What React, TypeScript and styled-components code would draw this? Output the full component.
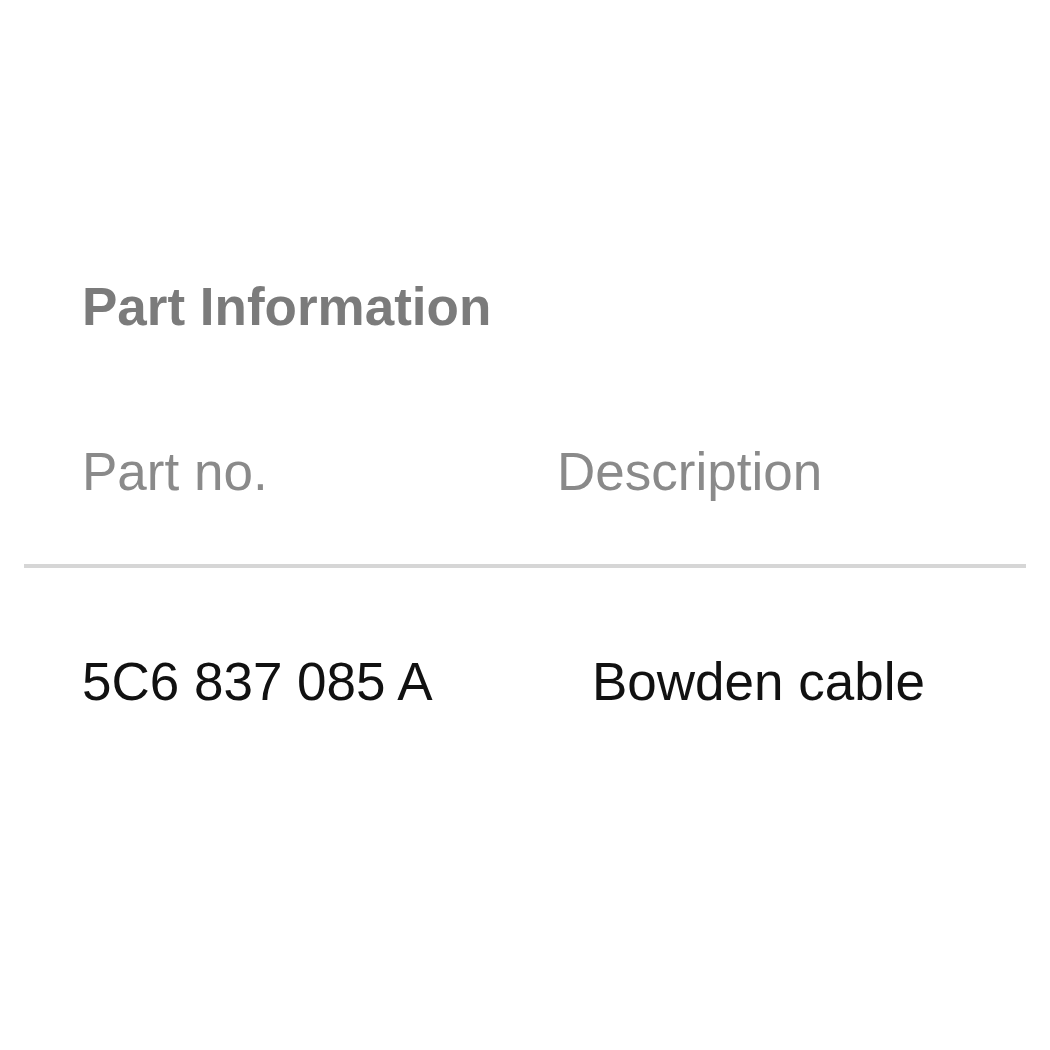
import React from 'react';
import styled, { createGlobalStyle } from 'styled-components';

const GlobalStyle = createGlobalStyle`
  body {
    margin: 0;
    background: #ffffff;
    font-family: 'Liberation Sans', Arial, sans-serif;
  }
`;

const Panel = styled.div`
  width: 1050px;
  height: 1050px;
  box-sizing: border-box;
  padding: 277px 24px 0 24px;
`;

const Heading = styled.h2`
  margin: 0 0 105px 58px;
  font-size: 53px;
  line-height: 60px;
  font-weight: bold;
  color: #7b7b7b;
`;

const Row = styled.div`
  display: grid;
  grid-template-columns: 475px 1fr;
  padding-left: 58px;
`;

const HeadCell = styled.div`
  font-size: 53px;
  line-height: 60px;
  color: #8a8a8a;
`;

const Divider = styled.hr`
  margin: 62px 0 84px 0;
  border: 0;
  height: 4px;
  background: #d6d6d6;
`;

const Cell = styled.div<{ indent?: number }>`
  font-size: 53px;
  line-height: 60px;
  color: #111111;
  padding-left: ${({ indent }) => indent || 0}px;
`;

const parts = [{ no: '5C6 837 085 A', description: 'Bowden cable' }];

export default function App() {
  return (
    <>
      <GlobalStyle />
      <Panel>
        <Heading>Part Information</Heading>
        <Row>
          <HeadCell>Part no.</HeadCell>
          <HeadCell>Description</HeadCell>
        </Row>
        <Divider />
        {parts.map((part) => (
          <Row key={part.no}>
            <Cell>{part.no}</Cell>
            <Cell indent={35}>{part.description}</Cell>
          </Row>
        ))}
      </Panel>
    </>
  );
}
